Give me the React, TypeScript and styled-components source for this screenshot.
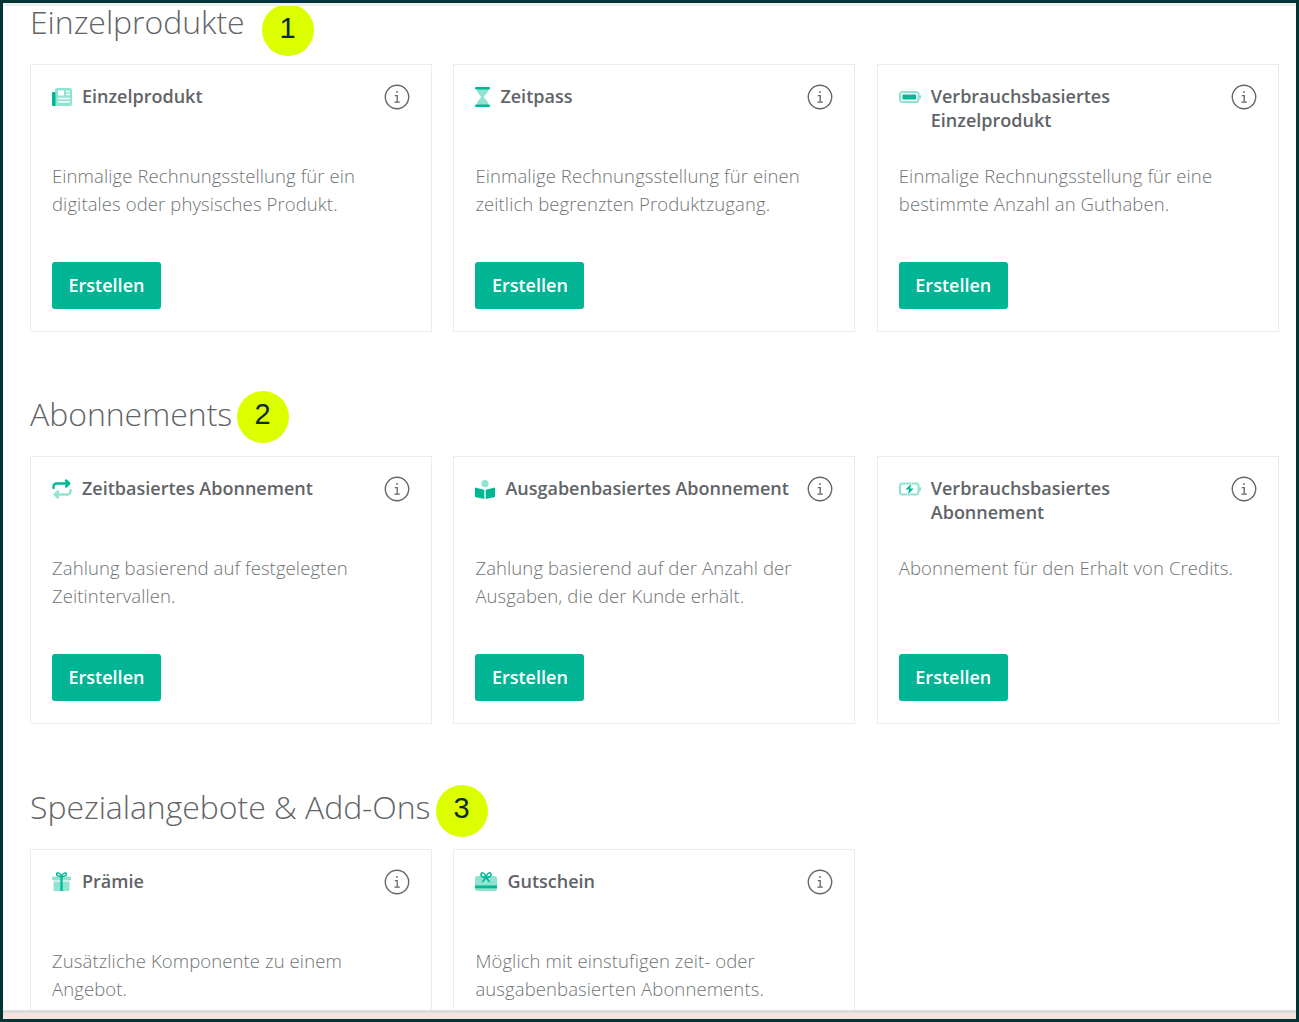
import React from "react";
import styled, { createGlobalStyle } from "styled-components";

const Global = createGlobalStyle`
  html, body { margin: 0; padding: 0; background: #fff; }
  * { box-sizing: border-box; }
`;

const DARK = "#00b894";
const LIGHT = "#8fe3d0";

const Frame = styled.div`
  width: 1299px;
  height: 1022px;
  border: 3px solid #023534;
  display: flex;
  flex-direction: column;
  overflow: hidden;
  background: #fff;
  font-family: "Open Sans", "Noto Sans", sans-serif;
`;
const TopRule = styled.div`
  height: 3px;
  flex: none;
  background: #eef0ef;
`;
const Main = styled.main`
  flex: 1;
  min-height: 0;
  overflow: hidden;
  padding: 0 17px 0 27px;
`;
const BottomStrip = styled.div`
  height: 9px;
  flex: none;
  background: #f7e3e0;
  border-top: 3px solid #dcdcdc;
`;
const Section = styled.section`
  position: relative;
  margin-bottom: 66.9px;
`;
const Heading = styled.h2`
  margin: 0;
  height: 58px;
  font-size: 32px;
  line-height: 32px;
  font-weight: 300;
  letter-spacing: -0.05px;
  color: #5f6567;
`;
const Badge = styled.span<{ $left: number; $top: number }>`
  position: absolute;
  left: ${(p) => p.$left}px;
  top: ${(p) => p.$top}px;
  width: 52px;
  height: 52px;
  border-radius: 50%;
  background: #dcff00;
  color: #0b2b2b;
  display: flex;
  align-items: center;
  justify-content: center;
  font-family: "Liberation Sans", Arial, sans-serif;
  font-size: 29px;
  padding: 0 1px 4px 0;
`;
const Grid = styled.div`
  display: grid;
  grid-template-columns: repeat(3, 402px);
  column-gap: 21.4px;
`;
const Card = styled.article`
  height: 267.5px;
  border: 1px solid #ececec;
  padding: 20px 21px;
`;
const CardHead = styled.div`
  display: flex;
  align-items: flex-start;
  height: 48px;
  margin-bottom: 29px;
`;
const IconSlot = styled.span<{ $gap: number }>`
  flex: none;
  display: flex;
  margin-right: ${(p) => p.$gap}px;
  height: 24px;
  align-items: center;
`;
const Title = styled.h3`
  margin: 0;
  flex: 1;
  font-size: 18px;
  line-height: 23.5px;
  font-weight: 600;
  color: #5f6468;
  white-space: nowrap;
`;
const InfoSlot = styled.span`
  flex: none;
  display: flex;
  height: 24px;
  margin-top: -1px;
`;
const Desc = styled.p`
  margin: 0 0 44px;
  height: 56px;
  font-size: 18.5px;
  line-height: 28px;
  font-weight: 300;
  letter-spacing: 0.1px;
  color: #6f7375;
  white-space: nowrap;
`;
const Button = styled.button`
  display: block;
  width: 109px;
  height: 47px;
  padding: 0 0 2px;
  border: 0;
  border-radius: 3px;
  background: #00b494;
  color: #fff;
  font-family: inherit;
  font-size: 18px;
  font-weight: 600;
`;

const Info = () => (
  <svg width="26" height="26" viewBox="0 0 26 26" fill="none" stroke="#666" strokeWidth="1.4">
    <circle cx="13" cy="13" r="11.7" />
    <circle cx="13" cy="8" r="0.9" fill="#666" stroke="none" />
    <path d="M10.8 11.6H13.2V18M10.4 18.2H15.8" strokeWidth="1.3" />
  </svg>
);

const Newspaper = () => (
  <svg width="20" height="18" viewBox="0 0 20 18">
    <rect x="0" y="4" width="4" height="14" rx="1" fill={DARK} />
    <rect x="3" y="0" width="17" height="18" rx="2" fill={LIGHT} />
    <rect x="6" y="2.5" width="6" height="5" fill="#fff" />
    <path d="M14 3.5h4M14 6.5h4M6 10.5h12M6 14h12" stroke="#fff" strokeWidth="1.3" />
    <path d="M3 5v12" stroke={DARK} strokeWidth="1" />
  </svg>
);
const Hourglass = () => (
  <svg width="15" height="20" viewBox="0 0 15 20">
    <path d="M2 2h11v2.5L8.8 10l4.2 5.5V18H2v-2.5L6.2 10 2 4.5z" fill={LIGHT} />
    <rect x="0" y="0" width="15" height="2.4" rx="1" fill={DARK} />
    <rect x="0" y="17.6" width="15" height="2.4" rx="1" fill={DARK} />
  </svg>
);
const Battery = () => (
  <svg width="22" height="12" viewBox="0 0 22 12">
    <rect x="1" y="1" width="18.5" height="10" rx="2.5" fill="none" stroke={LIGHT} strokeWidth="2" />
    <rect x="20" y="4" width="2" height="4" rx="1" fill={LIGHT} />
    <rect x="3.5" y="3.5" width="13.5" height="5" fill={DARK} />
  </svg>
);
const Repeat = () => (
  <svg width="20" height="20" viewBox="0 0 20 20" fill="none" strokeWidth="2.4" strokeLinecap="round" strokeLinejoin="round">
    <path d="M1.5 9V7.5a3 3 0 0 1 3-3H17M14 1.5l3.2 3-3.2 3" stroke={DARK} />
    <path d="M18.5 11v1.5a3 3 0 0 1-3 3H3M6 12.5l-3.2 3 3.2 3" stroke={LIGHT} />
  </svg>
);
const Reader = () => (
  <svg width="20" height="19" viewBox="0 0 20 19">
    <circle cx="10" cy="3.6" r="3.6" fill={LIGHT} />
    <path d="M0 7.5l9.3 2.2V19L0 17z" fill={DARK} />
    <path d="M20 7.5l-9.3 2.2V19l9.3-2z" fill={DARK} />
  </svg>
);
const BatteryBolt = () => (
  <svg width="22" height="14" viewBox="0 0 22 14">
    <rect x="1" y="1.5" width="18.5" height="11" rx="2.5" fill="none" stroke={LIGHT} strokeWidth="2" />
    <rect x="20" y="5" width="2" height="4" rx="1" fill={LIGHT} />
    <path d="M13.5 0L5 8h4.4L7.5 14l8.5-8h-4.4z" fill="#fff" />
    <path d="M12.6 1.6L6.4 7.4h3.8L8.6 12.4l6.2-5.8H11z" fill={DARK} />
  </svg>
);
const Gift = () => (
  <svg width="19" height="19" viewBox="0 0 19 19">
    <rect x="0" y="4.5" width="19" height="4" rx="1" fill={LIGHT} />
    <rect x="1.5" y="9.5" width="16" height="9.5" rx="1" fill={LIGHT} />
    <rect x="8.4" y="4.5" width="2.2" height="14.5" fill={DARK} />
    <path d="M9.5 4.5C7 4.5 4.2 3.6 4.6 1.8 5 .2 8.4.6 9.5 4.5 10.6.6 14 .2 14.4 1.8 14.8 3.6 12 4.5 9.5 4.5z" fill="none" stroke={DARK} strokeWidth="1.5" />
  </svg>
);
const Voucher = () => (
  <svg width="22" height="19" viewBox="0 0 22 19">
    <rect x="0" y="4" width="22" height="15" rx="2" fill={LIGHT} />
    <rect x="0" y="13.5" width="22" height="2.8" fill={DARK} />
    <path d="M11 5.5C8.4 5.5 5.6 4.5 6 2.2 6.4 0 10 .4 11 5.5 12 .4 15.6 0 16 2.2 16.4 4.5 13.6 5.5 11 5.5zM11 5.5l-3.6 4.5M11 5.5l3.6 4.5" fill="none" stroke={DARK} strokeWidth="1.6" />
  </svg>
);

type Item = { icon: React.ReactNode; gap: number; title: React.ReactNode; desc: React.ReactNode };

const groups: { heading: string; badge: string; left: number; top: number; items: Item[] }[] = [
  {
    heading: "Einzelprodukte",
    badge: "1",
    left: 232,
    top: -2,
    items: [
      { icon: <Newspaper />, gap: 10, title: "Einzelprodukt", desc: <>Einmalige Rechnungsstellung für ein<br />digitales oder physisches Produkt.</> },
      { icon: <Hourglass />, gap: 10, title: "Zeitpass", desc: <>Einmalige Rechnungsstellung für einen<br />zeitlich begrenzten Produktzugang.</> },
      { icon: <Battery />, gap: 10, title: <>Verbrauchsbasiertes<br />Einzelprodukt</>, desc: <>Einmalige Rechnungsstellung für eine<br />bestimmte Anzahl an Guthaben.</> },
    ],
  },
  {
    heading: "Abonnements",
    badge: "2",
    left: 207,
    top: -7.5,
    items: [
      { icon: <Repeat />, gap: 10, title: "Zeitbasiertes Abonnement", desc: <>Zahlung basierend auf festgelegten<br />Zeitintervallen.</> },
      { icon: <Reader />, gap: 10, title: "Ausgabenbasiertes Abonnement", desc: <>Zahlung basierend auf der Anzahl der<br />Ausgaben, die der Kunde erhält.</> },
      { icon: <BatteryBolt />, gap: 10, title: <>Verbrauchsbasiertes<br />Abonnement</>, desc: "Abonnement für den Erhalt von Credits." },
    ],
  },
  {
    heading: "Spezialangebote & Add-Ons",
    badge: "3",
    left: 406,
    top: -6,
    items: [
      { icon: <Gift />, gap: 11, title: "Prämie", desc: <>Zusätzliche Komponente zu einem<br />Angebot.</> },
      { icon: <Voucher />, gap: 10, title: "Gutschein", desc: <>Möglich mit einstufigen zeit- oder<br />ausgabenbasierten Abonnements.</> },
    ],
  },
];

export default function App() {
  return (
    <Frame>
      <Global />
      <TopRule />
      <Main>
        {groups.map((g) => (
          <Section key={g.heading}>
            <Heading>{g.heading}</Heading>
            <Badge $left={g.left} $top={g.top}>{g.badge}</Badge>
            <Grid>
              {g.items.map((it, i) => (
                <Card key={i}>
                  <CardHead>
                    <IconSlot $gap={it.gap}>{it.icon}</IconSlot>
                    <Title>{it.title}</Title>
                    <InfoSlot><Info /></InfoSlot>
                  </CardHead>
                  <Desc>{it.desc}</Desc>
                  <Button>Erstellen</Button>
                </Card>
              ))}
            </Grid>
          </Section>
        ))}
      </Main>
      <BottomStrip />
    </Frame>
  );
}
